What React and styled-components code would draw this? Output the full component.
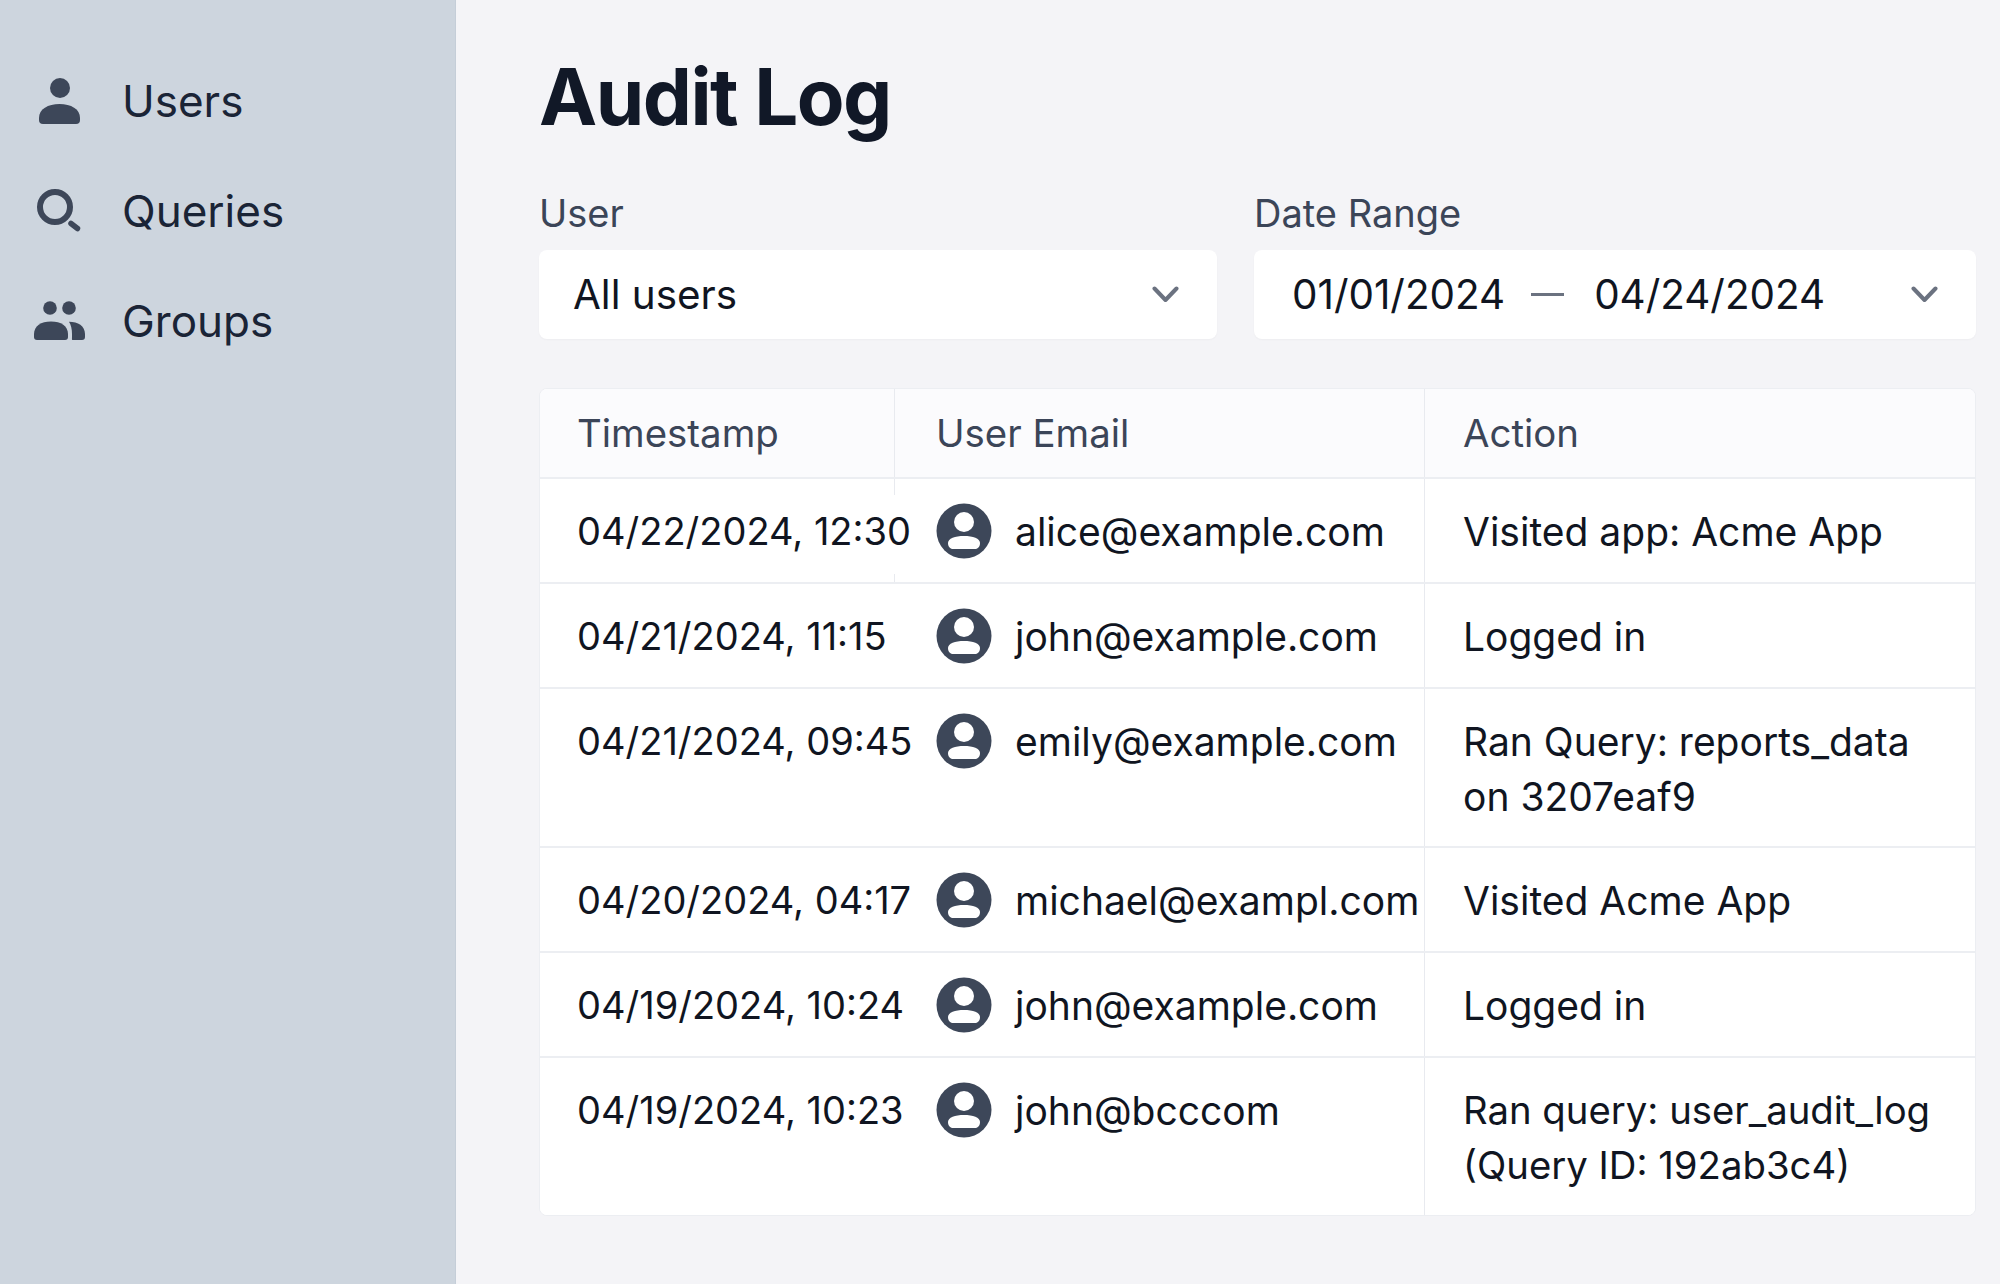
import React from 'react'
import styled, { createGlobalStyle } from 'styled-components'

const GlobalStyle = createGlobalStyle`
  html, body {
    margin: 0;
    padding: 0;
    background: #f4f4f7;
    font-family: Inter, 'Liberation Sans', sans-serif;
  }
  * {
    box-sizing: border-box;
  }
`

const Page = styled.div`
  display: flex;
  width: 2000px;
  height: 1284px;
  overflow: hidden;
`

const Sidebar = styled.aside`
  flex: 0 0 456px;
  background: #cdd5de;
  border-right: 1px solid #c5ced8;
  padding: 71px 0 0 34px;
  display: flex;
  flex-direction: column;
  gap: 50px;
`

const NavItem = styled.a`
  display: flex;
  align-items: center;
  gap: 37px;
  height: 60px;
  font-size: 44px;
  color: #1a2436;
  cursor: pointer;
`

const Main = styled.main`
  flex: 1;
  padding: 57px 24px 0 83px;
`

const Title = styled.h1`
  margin: 0 0 54px;
  font-size: 78px;
  line-height: 80px;
  font-weight: 700;
  letter-spacing: -1.500px;
  color: #111827;
`

const Filters = styled.div`
  display: grid;
  grid-template-columns: 678px 1fr;
  gap: 37px;
  margin-bottom: 49px;
`

const Field = styled.div`
  display: flex;
  flex-direction: column;
  gap: 15px;
`

const Label = styled.label`
  font-size: 38px;
  line-height: 44px;
  color: #3b4558;
`

const Select = styled.div`
  height: 89px;
  background: #fff;
  border-radius: 8px;
  box-shadow: 0 1px 2px rgba(17, 24, 39, 0.03);
  display: flex;
  align-items: center;
  justify-content: space-between;
  padding: ${(p) => (p.$dates ? '0 38px 1px 38px' : '0 38px 1px 34px')};
  font-size: 40.400px;
  color: #101521;
`

const DateRange = styled.span`
  display: flex;
  align-items: center;
  gap: 26px;
`

const Dash = styled.span`
  width: 33px;
  height: 3px;
  background: #6b7280;
  margin-right: 4px;
`

const Card = styled.section`
  background: #fff;
  border: 1px solid #eceef2;
  border-radius: 8px;
  overflow: hidden;
`

const Row = styled.div`
  display: grid;
  grid-template-columns: 355px 530px 1fr;
  border-bottom: ${(p) => (p.$last ? 'none' : '2px solid #eceef2')};
  background: ${(p) => (p.$head ? '#fbfbfd' : '#fff')};
`

const HeadCell = styled.div`
  height: 88px;
  display: flex;
  align-items: center;
  padding-left: ${(p) => p.$pad}px;
  font-size: 38.400px;
  color: #3b4558;
  border-right: ${(p) => (p.$end ? 'none' : '1px solid #e8eaef')};
`

const Cell = styled.div`
  padding-top: 25px;
  padding-bottom: 23px;
  font-size: 39px;
  line-height: 55px;
  color: #101521;
  white-space: pre-line;
`

const TimeCell = styled(Cell)`
  white-space: nowrap;
  padding-left: 37px;
  font-size: 38px;
  background: ${(p) =>
    p.$stub
      ? 'linear-gradient(#e8eaef, #e8eaef) right top / 1px 16px no-repeat, linear-gradient(#e8eaef, #e8eaef) right bottom / 1px 8px no-repeat'
      : 'none'};
`

const EmailCell = styled(Cell)`
  display: flex;
  align-items: flex-start;
  gap: 23px;
  white-space: nowrap;
  padding-left: 41px;
  border-right: 1px solid #e8eaef;
`

const ActionCell = styled(Cell)`
  padding-left: 38px;
  padding-bottom: 22px;
  font-size: ${(p) => (p.$tight ? '38.300px' : '39px')};
`

const Chevron = () => (
  <svg width="27" height="17" viewBox="0 0 27 17" fill="none">
    <path d="M2.500 2.500 13.500 14 24.500 2.500" stroke="#6b7280" strokeWidth="4" strokeLinecap="round" strokeLinejoin="round" />
  </svg>
)

const UserIcon = () => (
  <svg width="51" height="50" viewBox="0 0 51 50" fill="#3d4759">
    <circle cx="26" cy="12" r="10" />
    <path d="M5 42c0-9 9-14 20.500-14S46 33 46 42v2a4 4 0 0 1-4 4H9a4 4 0 0 1-4-4z" />
  </svg>
)

const SearchIcon = () => (
  <svg width="51" height="50" viewBox="0 0 51 50" fill="none" stroke="#3d4759">
    <circle cx="21" cy="21" r="15" strokeWidth="6" />
    <path d="M37 37.500 43.500 42.500" strokeWidth="5.500" strokeLinecap="round" />
  </svg>
)

const GroupIcon = () => (
  <svg width="51" height="50" viewBox="0 0 51 50" fill="#3d4759">
    <circle cx="16" cy="12" r="6.800" />
    <circle cx="35" cy="12" r="6.800" />
    <path d="M0 38c0-8 7-12.500 17-12.500S34 30 34 38v3a3 3 0 0 1-3 3H3a3 3 0 0 1-3-3z" />
    <path d="M35 25.800c9 0 16 4.200 16 12.200v3a3 3 0 0 1-3 3H38.500c-.8 0-.5-.8-.5-3v-3c0-5-1-9-3-12.200z" />
  </svg>
)

const AvatarIcon = styled.svg`
  flex: none;
  margin-top: -1px;
`

const Avatar = () => (
  <AvatarIcon width="56" height="56" viewBox="0 0 56 56">
    <circle cx="28" cy="28" r="27.500" fill="#3d4759" />
    <circle cx="28" cy="19" r="10" fill="#fff" />
    <path d="M12 40c0-4.500 7-7 16-7s16 2.500 16 7c0 3.500-2 6-5 6H17c-3 0-5-2.500-5-6z" fill="#fff" />
  </AvatarIcon>
)

const logs = [
  { time: '04/22/2024, 12:30', email: 'alice@example.com', action: 'Visited app: Acme App' },
  { time: '04/21/2024, 11:15', email: 'john@example.com', action: 'Logged in' },
  { time: '04/21/2024, 09:45', email: 'emily@example.com', action: 'Ran Query: reports_data\non 3207eaf9' },
  { time: '04/20/2024, 04:17', email: 'michael@exampl.com', action: 'Visited Acme App' },
  { time: '04/19/2024, 10:24', email: 'john@example.com', action: 'Logged in' },
  { time: '04/19/2024, 10:23', email: 'john@bcccom', action: 'Ran query: user_audit_log\n(Query ID: 192ab3c4)', tight: true },
]

const App = () => {
  return (
    <Page>
      <GlobalStyle />
      <Sidebar>
        <NavItem><UserIcon />Users</NavItem>
        <NavItem><SearchIcon />Queries</NavItem>
        <NavItem><GroupIcon />Groups</NavItem>
      </Sidebar>
      <Main>
        <Title>Audit Log</Title>
        <Filters>
          <Field>
            <Label>User</Label>
            <Select>
              All users
              <Chevron />
            </Select>
          </Field>
          <Field>
            <Label>Date Range</Label>
            <Select $dates>
              <DateRange>
                01/01/2024
                <Dash />
                04/24/2024
              </DateRange>
              <Chevron />
            </Select>
          </Field>
        </Filters>
        <Card>
          <Row $head>
            <HeadCell $pad={37}>Timestamp</HeadCell>
            <HeadCell $pad={41}>User Email</HeadCell>
            <HeadCell $pad={38} $end>Action</HeadCell>
          </Row>
          {logs.map((log, i) => (
            <Row key={i} $last={i === logs.length - 1}>
              <TimeCell $stub={i === 0}>{log.time}</TimeCell>
              <EmailCell><Avatar />{log.email}</EmailCell>
              <ActionCell $tight={log.tight}>{log.action}</ActionCell>
            </Row>
          ))}
        </Card>
      </Main>
    </Page>
  )
}

export default App
